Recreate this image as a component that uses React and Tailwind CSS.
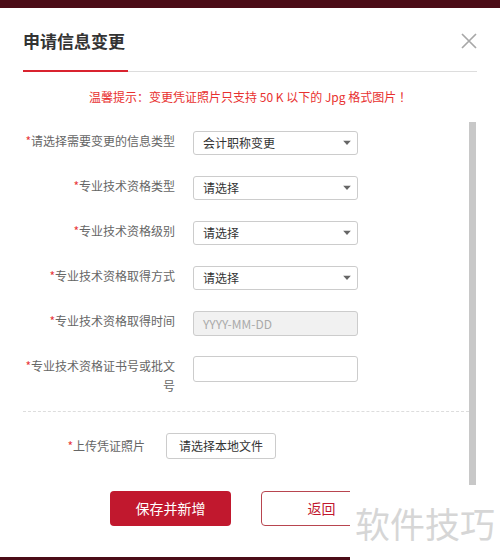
import React from "react";

const Arrow = () => (
  <svg width="8" height="5" viewBox="0 0 8 5" className="absolute right-[4px] top-1/2 -translate-y-1/2 mr-[2px]">
    <path d="M0 0 L8 0 L4 4.5 Z" fill="#666" />
  </svg>
);

const Label = ({ text, w = "w-[152px]" }) => (
  <div className={`${w} text-right text-[12px] leading-[20px] text-[#666]`}>
    <span className="text-[#e8363c]">*</span>
    {text}
  </div>
);

const SelectRow = ({ label, value }) => (
  <div className="flex items-start">
    <Label text={label} />
    <div className="relative ml-[18px] w-[165px] h-[24px] border border-[#ccc] rounded-[3px] bg-white flex items-center pl-[9px] text-[12px] text-[#333]">
      {value}
      <Arrow />
    </div>
  </div>
);

const App = () => {
  const rows = [
    { label: "请选择需要变更的信息类型", value: "会计职称变更" },
    { label: "专业技术资格类型", value: "请选择" },
    { label: "专业技术资格级别", value: "请选择" },
    { label: "专业技术资格取得方式", value: "请选择" },
  ];

  return (
    <div className="w-[500px] h-[560px] relative overflow-hidden bg-white flex flex-col font-['Noto_Sans_CJK_SC','Noto_Sans',sans-serif]">
      <div className="h-[8px] bg-[#4b0c17]" />

      <div className="px-[23px] pt-[21px] flex items-center justify-between">
        <h2 className="text-[17px] leading-[24px] font-bold text-[#333]">申请信息变更</h2>
        <svg width="16" height="16" viewBox="0 0 16 16">
          <path d="M1 1 L15 15 M15 1 L1 15" stroke="#a8a8a8" strokeWidth="1.7" />
        </svg>
      </div>

      <div className="mx-[23px] mt-[17px] flex items-end">
        <div className="w-[105px] h-[2px] bg-[#d9232f]" />
        <div className="flex-1 h-px bg-[#ddd]" />
      </div>

      <p className="mt-[15px] text-center text-[12px] leading-[20px] text-[#e8312f]">
        温馨提示：变更凭证照片只支持 50 K 以下的 Jpg 格式图片 ！
      </p>

      <div className="flex flex-1 min-h-0">
        <div className="flex-1 pl-[23px] pt-[24px] flex flex-col">
          <div className="flex flex-col gap-[21px]">
            {rows.map((r) => (
              <SelectRow key={r.label} label={r.label} value={r.value} />
            ))}
            <div className="flex items-start -mt-[0px]">
              <Label text="专业技术资格取得时间" />
              <div className="ml-[18px] w-[165px] h-[25px] border border-[#ccc] rounded-[3px] bg-[#f1f1f1] flex items-center pl-[9px] text-[12px] text-[#aaa]">
                YYYY-MM-DD
              </div>
            </div>
            <div className="flex items-start -mt-px">
              <Label text="专业技术资格证书号或批文号" />
              <div className="ml-[18px] w-[165px] h-[26px] border border-[#ccc] rounded-[3px] bg-white" />
            </div>
          </div>

          <div className="mt-[15px] border-t border-dashed border-[#ddd]" />

          <div className="mt-[21px] flex items-center">
            <Label text="上传凭证照片" w="w-[122px]" />
            <button className="ml-[21px] h-[26px] px-[12px] border border-[#ccc] rounded-[3px] bg-white text-[12px] text-[#333]">
              请选择本地文件
            </button>
          </div>

          <div className="mt-[32px] flex justify-center gap-[30px]">
            <button className="w-[121px] h-[35px] rounded-[4px] bg-[#c1182e] text-white text-[14px]">
              保存并新增
            </button>
            <button className="w-[121px] h-[35px] rounded-[4px] border border-[#b8454f] bg-white text-[#c1182e] text-[14px]">
              返回
            </button>
          </div>
        </div>
        <div className="w-[7px] mt-[15px] h-[363px] bg-[#c8c8c8]" />
        <div className="w-[24px]" />
      </div>

      <div className="h-[3px] bg-[#4b0c17]" />

      <div className="absolute right-0 bottom-0 w-[150px] h-[73px] bg-white flex items-center justify-center">
        <span className="text-[35px] leading-none text-[#d6d6d6] font-['Noto_Sans_CJK_SC',sans-serif] mt-[-2px]">软件技巧</span>
      </div>
    </div>
  );
};

export default App;
